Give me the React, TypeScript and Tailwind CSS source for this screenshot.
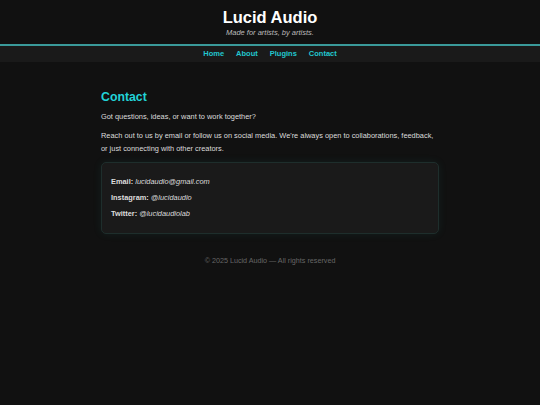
export default function App() {
  return (
    <div className="min-h-[405px] bg-[#111111] font-['Liberation_Sans',Arial,sans-serif] text-[#dddddd]">
      <header className="pt-[7px] pb-[6px] text-center">
        <h1 className="text-[16.5px] font-bold leading-[20px] text-white">Lucid Audio</h1>
        <p className="mt-[1px] text-[7.5px] italic leading-[10px] text-[#bbbbbb]">Made for artists, by artists.</p>
      </header>
      <div className="h-[2px] bg-[#3a9a9a]" />
      <nav className="flex h-[16px] items-center justify-center gap-[12px] bg-[#1a1a1a] text-[7.5px] font-bold text-[#22c7cf]">
        <a>Home</a>
        <a>About</a>
        <a>Plugins</a>
        <a>Contact</a>
      </nav>
      <main className="mx-auto w-[338px] pt-[28px]">
        <h2 className="text-[12.3px] font-bold leading-[15px] text-[#22d3d8]">Contact</h2>
        <p className="mt-[5px] text-[7.4px] leading-[13px]">Got questions, ideas, or want to work together?</p>
        <p className="mt-[6px] text-[7.4px] leading-[13px]">
          Reach out to us by email or follow us on social media. We're always open to collaborations, feedback,
          or just connecting with other creators.
        </p>
        <div className="mt-[7px] rounded-[5px] border border-[#1e2e2c] bg-[#1a1a1a] px-[9px] py-[11px] text-[7.4px] leading-[16px] shadow-[0_0_8px_rgba(40,160,150,0.1)]">
          <p><span className="font-bold">Email:</span> <em>lucidaudio@gmail.com</em></p>
          <p><span className="font-bold">Instagram:</span> <em>@lucidaudio</em></p>
          <p><span className="font-bold">Twitter:</span> <em>@lucidaudiolab</em></p>
        </div>
      </main>
      <footer className="pt-[21px] text-center text-[7.2px] leading-[12px] text-[#666666]">© 2025 Lucid Audio — All rights reserved</footer>
    </div>
  )
}
